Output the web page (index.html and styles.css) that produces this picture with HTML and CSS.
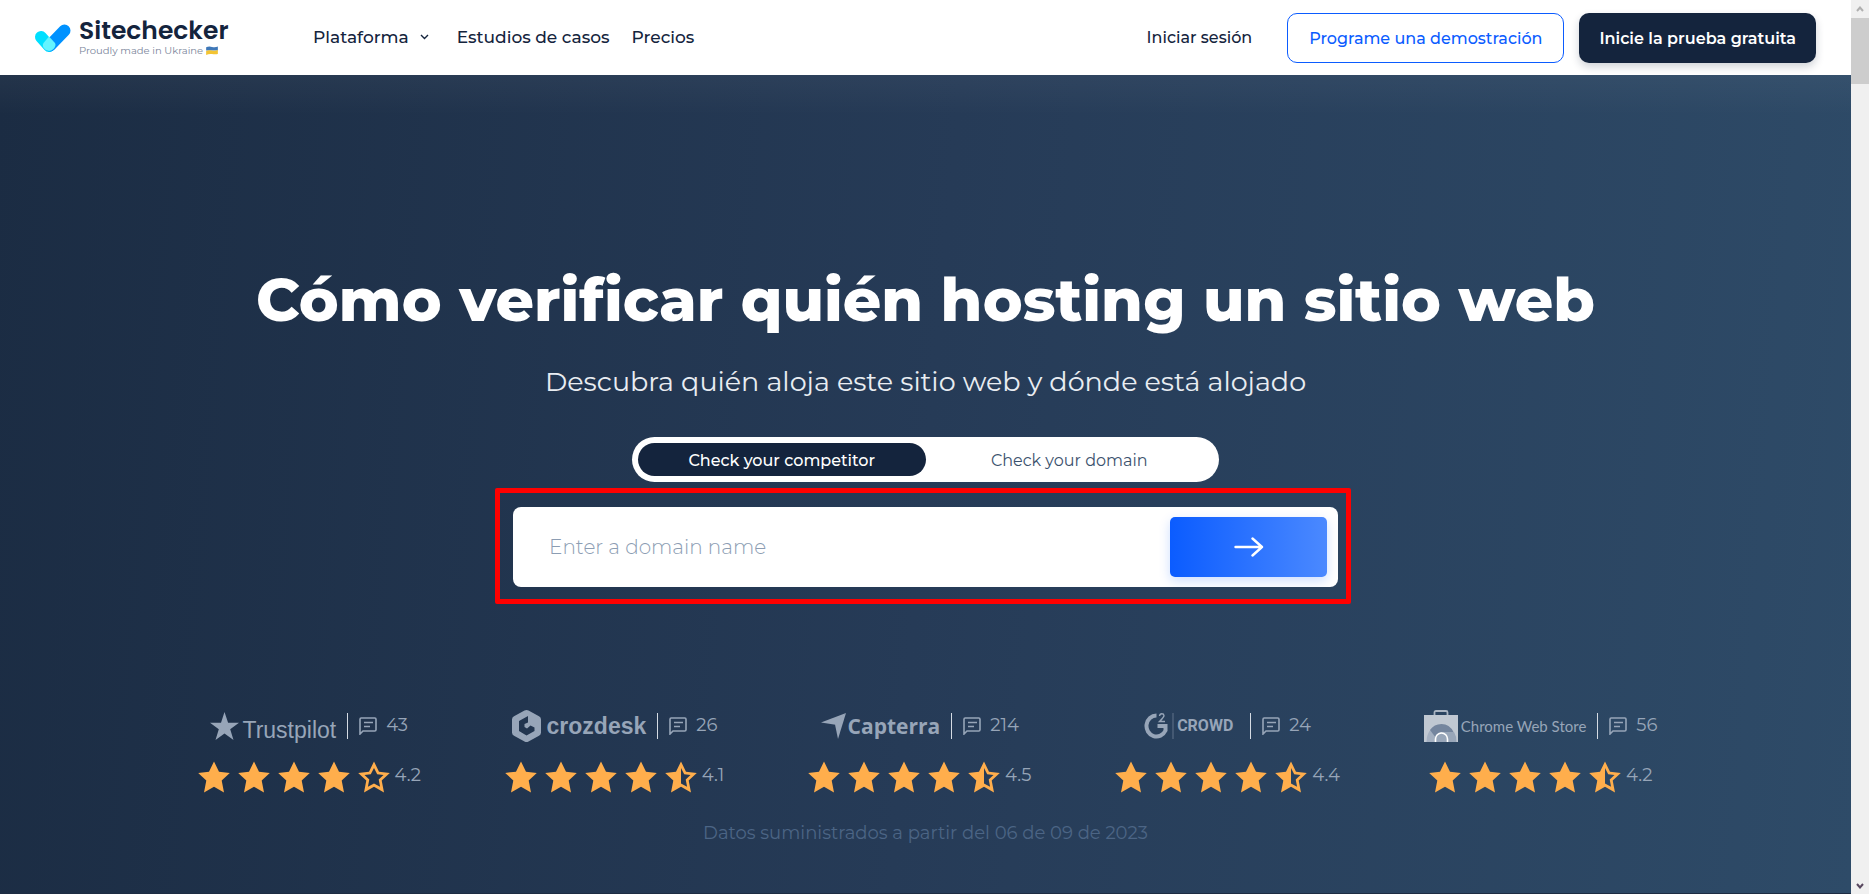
FILE: index.html
```html
<!DOCTYPE html>
<html lang="es">
<head>
<meta charset="utf-8">
<meta name="viewport" content="width=device-width, initial-scale=1">
<title>Cómo verificar quién hosting un sitio web</title>
<link rel="stylesheet" href="styles.css">
</head>
<body>
<svg class="sprite" aria-hidden="true">
  <symbol id="star" viewBox="0 0 32 32"><path d="M16 0.500l5 10.200 10.800 1.200-8.100 7.500 2.300 12L16 25.800 6 31.400l2.300-12L.2 11.900 11 10.700z"/></symbol>
  <symbol id="star-empty" viewBox="0 0 32 32"><path fill-rule="evenodd" d="M16 .5l5 10.200 10.800 1.200-8.100 7.500 2.300 12L16 25.800 6 31.400l2.300-12L.2 11.900 11 10.700zM16 7l-3.200 6.200-6.300.8 4.800 4.600-1.400 7.200 6.100-3.300 6.100 3.300-1.400-7.200 4.800-4.600-6.300-.8z"/></symbol>
  <symbol id="star-half" viewBox="0 0 32 32"><path fill-rule="evenodd" d="M16 .5l5 10.200 10.800 1.200-8.100 7.500 2.300 12L16 25.800 6 31.400l2.300-12L.2 11.900 11 10.700zM16 7v15.500l6.100 3.300-1.400-7.200 4.800-4.600-6.300-.8z"/></symbol>
  <symbol id="comment" viewBox="0 0 18 18"><path d="M1 17V2.200Q1 1 2.200 1H15.800Q17 1 17 2.200V12.800Q17 14 15.800 14H4zM5 5.500h9M5 9.500h6" fill="none" stroke="currentColor" stroke-width="1.600"/></symbol>
</svg>

<div class="page">
  <header class="header">
    <a class="brand" href="#">
      <svg class="brand-mark" viewBox="0 0 36 28" aria-hidden="true">
        <path d="M6 13L14 22" stroke="#00dfff" stroke-width="12" stroke-linecap="round"/>
        <path d="M29.500 6.500L15 21.500" stroke="#0092ff" stroke-width="12" stroke-linecap="round"/>
        <path d="M14 12.500L20 19q1.500 2.500-1.500 6-4 3.500-8.500.500-3.500-3.500-1.500-6.500z" fill="#63f4ff"/>
      </svg>
      <span class="brand-text">
        <span class="brand-name">Sitechecker</span>
        <span class="brand-tag">Proudly made in Ukraine
          <svg class="flag" viewBox="0 0 13 10" aria-hidden="true"><path d="M0 1.500Q3 0 6.500 1T13 .5V5H0z" fill="#3f78b8"/><path d="M0 5.500Q3 4 6.500 5T13 4.500V9Q10 9.500 6.500 9T0 10z" fill="#f3c433"/></svg>
        </span>
      </span>
    </a>
    <nav class="nav">
      <a class="nav-drop" href="#">Plataforma
        <svg class="chevron" viewBox="0 0 9 6" aria-hidden="true"><path d="M1 1l3.500 3.500L8 1" fill="none" stroke="currentColor" stroke-width="1.400"/></svg>
      </a>
      <a href="#">Estudios de casos</a>
      <a href="#">Precios</a>
    </nav>
    <div class="actions">
      <a class="login" href="#">Iniciar sesión</a>
      <button class="btn btn-outline" type="button">Programe una demostración</button>
      <button class="btn btn-dark" type="button">Inicie la prueba gratuita</button>
    </div>
  </header>

  <main class="hero">
    <h1 class="title">Cómo verificar quién hosting un sitio web</h1>
    <p class="subtitle">Descubra quién aloja este sitio web y dónde está alojado</p>
    <div class="switch">
      <button class="switch-item is-active" type="button">Check your competitor</button>
      <button class="switch-item" type="button">Check your domain</button>
    </div>
    <div class="highlight">
      <form class="search">
        <input class="search-input" type="text" placeholder="Enter a domain name" aria-label="Enter a domain name">
        <button class="search-btn" type="button" aria-label="Check">
          <svg class="arrow" viewBox="0 0 30 20" aria-hidden="true"><path d="M1.500 10H28M18.500 1.500L28 10l-9.500 8.500" fill="none" stroke="#fff" stroke-width="2.400" stroke-linecap="round" stroke-linejoin="round"/></svg>
        </button>
      </form>
    </div>

    <div class="reviews">
      <section class="review">
        <div class="source">
          <svg class="logo-star" viewBox="0 0 29 29" aria-hidden="true"><path d="M14.500 0l3.600 10.700H29l-8.800 6.600L23.500 28l-9-6.600-9 6.600 3.300-10.700L0 10.700h11z"/></svg>
          <span class="mark mark-trustpilot">Trustpilot</span>
          <span class="rule"></span><svg class="comment"><use href="#comment"/></svg><span class="count">43</span>
        </div>
        <div class="rating">
          <svg class="star"><use href="#star"/></svg><svg class="star"><use href="#star"/></svg><svg class="star"><use href="#star"/></svg><svg class="star"><use href="#star"/></svg><svg class="star"><use href="#star-empty"/></svg>
          <span class="score">4.2</span>
        </div>
      </section>

      <section class="review">
        <div class="source">
          <svg class="logo-hex" viewBox="0 0 29 32" aria-hidden="true"><path fill-rule="evenodd" d="M12.500.6q2-1 4 0L27 6.300q2 1 2 3.200v13q0 2.200-2 3.200l-10.500 5.700q-2 1-4 0L2 25.700q-2-1-2-3.200v-13q0-2.200 2-3.200zM16 6L7 11v10l7.500 4.500 8-4.500v-3.500l-4-2-3.500 3-2.500-1.500v-3l3.500-1.500z"/></svg>
          <span class="mark mark-crozdesk">crozdesk</span>
          <span class="rule"></span><svg class="comment"><use href="#comment"/></svg><span class="count">26</span>
        </div>
        <div class="rating">
          <svg class="star"><use href="#star"/></svg><svg class="star"><use href="#star"/></svg><svg class="star"><use href="#star"/></svg><svg class="star"><use href="#star"/></svg><svg class="star"><use href="#star-half"/></svg>
          <span class="score">4.1</span>
        </div>
      </section>

      <section class="review">
        <div class="source">
          <svg class="logo-plane" viewBox="0 0 25 26" aria-hidden="true"><path d="M0 9.500L25 0 16 12z"/><path d="M25 0l-8 26-3-14.500z"/></svg>
          <span class="mark mark-capterra">Capterra</span>
          <span class="rule"></span><svg class="comment"><use href="#comment"/></svg><span class="count">214</span>
        </div>
        <div class="rating">
          <svg class="star"><use href="#star"/></svg><svg class="star"><use href="#star"/></svg><svg class="star"><use href="#star"/></svg><svg class="star"><use href="#star"/></svg><svg class="star"><use href="#star-half"/></svg>
          <span class="score">4.5</span>
        </div>
      </section>

      <section class="review">
        <div class="source">
          <svg class="logo-g" viewBox="0 0 30 26" aria-hidden="true"><path d="M12.500 2.500A10 10.500 0 1 0 21.500 17.500V13H13.500" fill="none" stroke="currentColor" stroke-width="4"/><path d="M15.500 3q.3-2.300 2.300-2.300t2.200 1.800q0 1.700-4.500 6H21" fill="none" stroke="currentColor" stroke-width="1.400"/><path d="M29 0v26" stroke="currentColor" stroke-opacity=".5"/></svg>
          <span class="mark mark-crowd">CROWD</span>
          <span class="rule"></span><svg class="comment"><use href="#comment"/></svg><span class="count">24</span>
        </div>
        <div class="rating">
          <svg class="star"><use href="#star"/></svg><svg class="star"><use href="#star"/></svg><svg class="star"><use href="#star"/></svg><svg class="star"><use href="#star"/></svg><svg class="star"><use href="#star-half"/></svg>
          <span class="score">4.4</span>
        </div>
      </section>

      <section class="review">
        <div class="source">
          <svg class="logo-bag" viewBox="0 0 34 32" aria-hidden="true"><path d="M10.500 6V2.500q0-1.500 1.500-1.500h10q1.500 0 1.500 1.500V6" fill="none" stroke="#a9b4c2" stroke-width="1.800"/><path d="M0 5h34v27H0z" fill="#c0c8d2"/><path d="M2.500 32A15 18 0 0 1 7 19l6 10v3z" fill="#a4b0c1"/><path d="M6 20q4-6 11.500-6 8 0 12 8H17l-5 6z" fill="#74859e"/><path d="M17 22h13q3 5 2.500 10H17z" fill="#98a6b9"/><path d="M11.500 32v-3a6 6 0 0 1 12 0v3" fill="#98a6b9" stroke="#fff" stroke-width="1.600"/></svg>
          <span class="mark mark-chrome">Chrome Web Store</span>
          <span class="rule"></span><svg class="comment"><use href="#comment"/></svg><span class="count">56</span>
        </div>
        <div class="rating">
          <svg class="star"><use href="#star"/></svg><svg class="star"><use href="#star"/></svg><svg class="star"><use href="#star"/></svg><svg class="star"><use href="#star"/></svg><svg class="star"><use href="#star-half"/></svg>
          <span class="score">4.2</span>
        </div>
      </section>
    </div>
    <p class="note">Datos suministrados a partir del 06 de 09 de 2023</p>
  </main>
</div>

<div class="scrollbar" aria-hidden="true">
  <svg class="scroll-up" viewBox="0 0 8 6"><path d="M1 5l3-3.500L7 5" fill="none" stroke="currentColor" stroke-width="2"/></svg>
  <span class="thumb"></span>
  <svg class="scroll-down" viewBox="0 0 8 6"><path d="M1 1l3 3.500L7 1" fill="none" stroke="currentColor" stroke-width="2"/></svg>
</div>
</body>
</html>
```

FILE: styles.css
```css
* { box-sizing: border-box; }

body {
  margin: 0;
  display: flex;
  min-height: 100vh;
  font-family: Montserrat, Inter, sans-serif;
  color: #14243d;
}

a { color: inherit; text-decoration: none; }
button, input { font: inherit; }

.sprite { position: absolute; width: 0; height: 0; }

.page {
  flex: 1;
  min-width: 0;
  display: flex;
  flex-direction: column;
}

/* Header */
.header {
  height: 75px;
  flex: none;
  display: flex;
  align-items: center;
  padding: 0 35px;
  background: #fff;
  font-size: 17px;
  font-weight: 500;
  white-space: nowrap;
}

.brand { display: flex; align-items: center; gap: 8px; width: 278px; }
.brand-mark { width: 36px; height: 28px; overflow: visible; }
.brand-text { display: flex; flex-direction: column; padding-bottom: 4px; }
.brand-name { font-family: Poppins, Montserrat, sans-serif; font-size: 25px; line-height: 30px; font-weight: 600; }
.brand-tag {
  display: flex;
  align-items: center;
  gap: 3px;
  font-size: 10px;
  line-height: 10px;
  font-weight: 400;
  color: #7b869b;
}
.flag { width: 12px; height: 9px; }

.nav { display: flex; gap: 22px; padding-bottom: 2px; }
.nav-drop { display: flex; align-items: center; gap: 11px; margin-right: 6px; }
.chevron { width: 9px; height: 6px; }

.actions { display: flex; align-items: center; margin-left: auto; font-size: 16px; }
.login { margin-right: 35px; }
.btn {
  height: 50px;
  padding: 2px 20px 0;
  border-radius: 10px;
  cursor: pointer;
}
.btn-outline {
  margin-right: 15px;
  padding: 2px 21px 0;
  border: 1px solid #0b5cff;
  background: #fff;
  color: #0b5cff;
}
.btn-dark {
  border: 0;
  background: #14243d;
  color: #fff;
  font-weight: 600;
  box-shadow: 0 4px 8px rgba(20, 36, 61, 0.2);
}

/* Hero */
.hero {
  flex: 1;
  display: flex;
  flex-direction: column;
  align-items: center;
  padding: 188px 24px 40px;
  background:
    linear-gradient(180deg, rgba(255, 255, 255, 0.04), rgba(255, 255, 255, 0) 40px),
    linear-gradient(95deg, #1b2c43, #263b57 50%, #2e4b68);
  border-bottom: 1px solid #1d2c42;
  text-align: center;
}

.title {
  margin: 0;
  color: #fff;
  font-size: 60px;
  line-height: 74px;
  font-weight: 800;
}

.subtitle {
  margin: 28px 0 0;
  color: #e9edf2;
  font-size: 27px;
  line-height: 34px;
  font-weight: 400;
}

.switch {
  display: flex;
  width: 587px;
  max-width: 100%;
  margin-top: 38px;
  padding: 6px;
  border-radius: 23px;
  background: #fff;
}
.switch-item {
  flex: 1;
  height: 33px;
  padding: 2px 6px 0;
  border: 0;
  border-radius: 17px;
  background: none;
  color: #3b516d;
  font-size: 16px;
}
.switch-item.is-active { background: #14243d; color: #fff; font-weight: 500; }

.highlight {
  width: 856px;
  max-width: 100%;
  margin: 6px 5px 0 0;
  padding: 14px 8px 12px 13px;
  border: 5px solid #f00;
  border-radius: 2px;
}
.search {
  display: flex;
  align-items: center;
  height: 80px;
  padding-right: 11px;
  border-radius: 8px;
  background: #fff;
  overflow: hidden;
}
.search-input {
  flex: 1;
  min-width: 0;
  height: 80px;
  padding: 0 36px;
  border: 0;
  outline: 0;
  background: none;
  font-size: 20px;
  font-weight: 300;
}
.search-input::placeholder { color: #8c9db3; opacity: 1; }
.search-btn {
  width: 157px;
  height: 60px;
  display: flex;
  align-items: center;
  justify-content: center;
  border: 0;
  border-radius: 5px;
  background: linear-gradient(90deg, #0b5cff, #4b89ff);
  box-shadow: 0 4px 12px rgba(11, 92, 255, 0.2);
}
.arrow { width: 30px; height: 20px; }

/* Reviews */
.reviews {
  display: flex;
  justify-content: space-between;
  width: 100%;
  max-width: 1464px;
  padding-left: 4px;
  margin-top: 105px;
  color: #97a5b8;
}
.review { display: flex; flex-direction: column; align-items: center; gap: 18px; }
.source { display: flex; align-items: center; height: 34px; fill: currentColor; white-space: nowrap; }
.rule { width: 1px; height: 26px; margin: 0 11px; background: #d5dbe3; }
.comment { width: 18px; height: 18px; margin-right: 9px; }
.count, .score { font-size: 18px; line-height: 24px; }
.count { padding-bottom: 3px; }

.mark { line-height: 28px; }
.mark-trustpilot { margin-left: 3px; padding-top: 7px; font: 23px/24px "Liberation Sans", sans-serif; }
.mark-crozdesk { margin-left: 6px; font-family: "Liberation Sans", sans-serif; font-size: 23px; font-weight: 700; }
.mark-capterra { margin-left: 2px; font-family: "Open Sans", sans-serif; font-size: 21px; font-weight: 700; }
.mark-crowd { margin-left: 3px; margin-right: 6px; font-family: "Liberation Sans Narrow", Roboto, sans-serif; font-size: 16px; font-weight: 700; }
.mark-chrome { margin-left: 3px; font-family: Lato, sans-serif; font-size: 15px; font-weight: 400; }

.logo-star { width: 29px; height: 29px; }
.logo-hex { width: 29px; height: 32px; }
.logo-plane { width: 25px; height: 26px; }
.logo-g { width: 30px; height: 26px; }
.logo-bag { width: 34px; height: 32px; }

.rating { display: flex; align-items: center; gap: 8px; }
.rating .score { margin-left: -3px; margin-bottom: 4px; }
.star { width: 32px; height: 32px; fill: #ffae4c; }

.note {
  margin: 26px 0 0;
  color: #4c6585;
  font-size: 18px;
  line-height: 28px;
}

/* Window scrollbar */
.scrollbar {
  width: 18px;
  flex: none;
  display: flex;
  flex-direction: column;
  align-items: center;
  background: #f0f0f0;
}
.scroll-up { width: 8px; height: 6px; margin: 6px 0; color: #b0b0b0; }
.scroll-down { width: 8px; height: 6px; margin: auto 0 5px; color: #58485f; }
.thumb { width: 18px; height: 66px; background: #cdcdcd; }
```
